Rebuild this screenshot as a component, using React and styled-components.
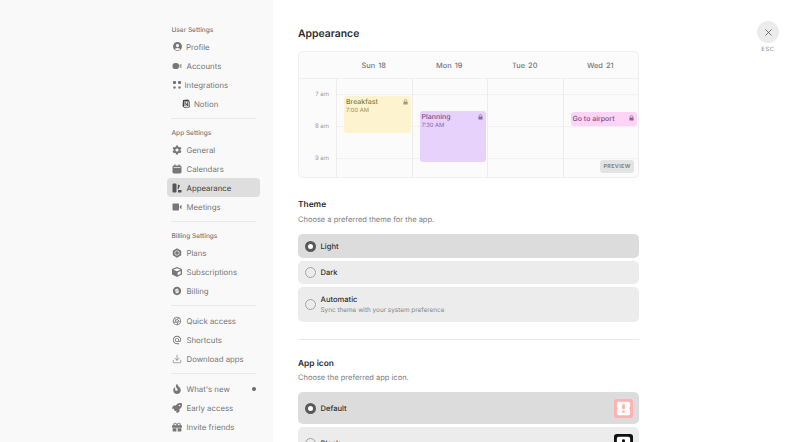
import React from "react";
import styled, { createGlobalStyle } from "styled-components";
import { X, Download } from "lucide-react";
import { IoPersonCircle, IoSettingsSharp } from "react-icons/io5";
import { FaCube, FaFire, FaRocket, FaGift } from "react-icons/fa";
import { RiMoneyDollarCircleFill } from "react-icons/ri";
import { TbAperture } from "react-icons/tb";
import { MdAlternateEmail } from "react-icons/md";

const Global = createGlobalStyle`
  html, body { margin: 0; padding: 0; height: 442px; overflow: hidden; background: #fff; }
  body { font-family: Inter, "Liberation Sans", sans-serif; -webkit-font-smoothing: antialiased; text-rendering: geometricPrecision; }
  * { box-sizing: border-box; }
`;
const Page = styled.div`display: flex; width: 800px; height: 442px; overflow: hidden; background: #fff; position: relative;`;
const Sidebar = styled.aside`width: 273px; flex: none; background: #f9f9f9; padding: 20px 13px 0 167px; display: flex; flex-direction: column;`;
const Heading = styled.div`height: 19px; padding-left: 4.5px; font-size: 6.5px; font-weight: 500; line-height: 21px; color: #777; margin-bottom: -2px; white-space: nowrap;`;
const Row = styled.div`
  height: 19px; display: flex; align-items: center; gap: ${p => p.$gap ?? 4.5}px;
  padding-left: ${p => p.$indent ?? 5}px; border-radius: 4px; flex: none; white-space: nowrap;
  font-size: 7.8px; font-weight: 400; color: ${p => p.$active ? "#3d3d3d" : "#767676"};
  background: ${p => p.$active ? "#dedede" : "transparent"};
  svg { flex: none; }
`;
const Rule = styled.div`height: 1px; background: #e9e9e9; margin: ${p => p.$m || "5px 4px 4px"};`;
const Dot = styled.span`width: 4px; height: 4px; border-radius: 50%; background: #6a6a6a; margin-left: auto; margin-right: 4px;`;
const Main = styled.main`flex: 1; padding: 26px 0 0 25px; min-width: 0;`;
const Column = styled.div`width: 341px;`;
const Title = styled.h1`margin: 0 0 10px; font-size: 10.4px; line-height: 15px; font-weight: 600; color: #2b2b2b;`;
const Preview = styled.div`height: 127px; border: 1px solid #efefef; border-radius: 5px; background: #fbfbfb; overflow: hidden; position: relative; display: grid; grid-template-columns: 37px repeat(4, 1fr); grid-template-rows: 27px 1fr;`;
const DayHead = styled.div`display: flex; align-items: center; justify-content: center; border-bottom: 1px solid #f0f0f0; font-size: 7.4px; word-spacing: 1px; color: #777; font-weight: 500;`;
const Gutter = styled.div`display: flex; flex-direction: column; padding-top: 11px; gap: 23px;`;
const Hour = styled.div`height: 9px; line-height: 9px; font-size: 6px; color: #9a9a9a; text-align: right; padding-right: 7px;`;
const DayCol = styled.div`
  position: relative; border-left: 1px solid #ececec;
  background: linear-gradient(#f1f1f1,#f1f1f1) 0 15px/100% 1px no-repeat, linear-gradient(#f1f1f1,#f1f1f1) 0 47px/100% 1px no-repeat, linear-gradient(#f1f1f1,#f1f1f1) 0 79px/100% 1px no-repeat;
`;
const Event = styled.div`
  position: absolute; top: ${p => p.$top}px; left: ${p => p.$left}px; right: ${p => p.$right}px; height: ${p => p.$h}px;
  background: ${p => p.$bg}; color: ${p => p.$fg}; border-radius: 3px; padding: ${p => p.$pad || "1px 2px"}; font-size: 7px; line-height: 10px; font-weight: 500;
  svg { position: absolute; right: 3px; top: 2.5px; }
  small { display: block; font-size: 5.8px; line-height: 7px; font-weight: 400; opacity: .85; }
`;
const PreviewTag = styled.div`position: absolute; right: 4px; bottom: 4px; width: 34px; height: 13px; border-radius: 3px; background: #e3e3e3; color: #858585; font-size: 5.4px; font-weight: 700; letter-spacing: .35px; display: flex; align-items: center; justify-content: center;`;
const Section = styled.h2`margin: 21px 0 0; font-size: 8.4px; line-height: 12px; font-weight: 600; color: #2b2b2b;`;
const Sub = styled.p`margin: ${p => p.$mt}px 0 ${p => p.$mb}px; font-size: 7.5px; line-height: 11px; color: #808080;`;
const Option = styled.div`
  height: ${p => p.$h}px; margin-bottom: 3px; border-radius: 5px; background: ${p => p.$on ? "#dcdcdc" : "#ececec"};
  display: flex; align-items: center; gap: 4.5px; padding: 0 6px 0 7px; font-size: 7.6px; color: #333; font-weight: 500; position: relative;
`;
const Radio = styled.span`
  width: 11px; height: 11px; border-radius: 50%; flex: none;
  ${p => p.$on ? "background:#fff;border:3px solid #595959;" : "border:1px solid #a4a4a4;"}
`;
const OptText = styled.div`display: flex; flex-direction: column; gap: 2px; small { font-size: 6.4px; font-weight: 400; color: #858585; }`;
const AppIcon = styled.svg`margin-left: auto; flex: none;`;
const Divider = styled.div`height: 1px; background: #e9e9e9; margin-top: 17px; margin-bottom: -3px;`;
const Close = styled.div`position: absolute; right: 21px; top: 21px; display: flex; flex-direction: column; align-items: center; gap: 3px; color: #a0a0a0; font-size: 5.8px; font-weight: 500; letter-spacing: .6px;`;
const CloseBtn = styled.div`width: 22px; height: 22px; border-radius: 50%; background: #ececec; display: flex; align-items: center; justify-content: center; color: #555;`;

const c = "#777";
const Grid = () => <svg width="10" height="10" viewBox="0 0 10 10" fill={c}><rect x="1" y="1" width="3" height="3" rx=".7"/><rect x="6" y="1" width="3" height="3" rx=".7"/><circle cx="2.5" cy="7.5" r="1.2"/><circle cx="7.5" cy="7.5" r="1.2"/></svg>;
const Cam = () => <svg width="10" height="10" viewBox="0 0 10 10" fill={c}><rect x=".5" y="2" width="6.5" height="6" rx="2.8"/><path d="M7.5 3.8l2-1v4.4l-2-1z" opacity=".7"/></svg>;
const Meet = () => <svg width="10" height="10" viewBox="0 0 10 10" fill={c}><rect x=".5" y="1.5" width="6.5" height="7" rx=".8"/><path d="M7.8 4l1.7-1.2v4.4L7.8 6z"/></svg>;
const Cal = () => <svg width="10" height="10" viewBox="0 0 10 10" fill={c}><rect x=".5" y="1.5" width="9" height="8" rx="1.4"/><rect x="2.5" y=".3" width="1" height="2"/><rect x="6.5" y=".3" width="1" height="2"/><rect x="1.5" y="3" width="7" height=".7" fill="#f9f9f9"/></svg>;
const Notion = () => <svg width="8" height="9" viewBox="0 0 8 9"><path d="M1 1l5-.6L7.6 2v6.4L2 8.8.5 7z" fill="#444"/><rect x="2" y="2.5" width="4.7" height="5.4" fill="#eee"/><path d="M3 7V3.3L5.6 7V3.3" stroke="#333" strokeWidth=".8" fill="none"/></svg>;
const Appear = () => <svg width="10" height="10" viewBox="0 0 10 10" fill="#555"><rect x=".5" y=".5" width="4" height="9" rx="1"/><path d="M6 1.5l2 1-1.5 3.5H5.5zM6 7h3.5v2.5H6z"/></svg>;
const Plan = () => <svg width="10" height="10" viewBox="0 0 10 10"><path d="M5 .3l4.2 2.4v4.6L5 9.7.8 7.3V2.7z" fill={c}/><circle cx="5" cy="5" r="2.2" fill="none" stroke="#f9f9f9" strokeWidth=".7"/></svg>;
const Lk = ({ col }) => <svg width="5" height="6" viewBox="0 0 6 7"><path d="M1.5 3V2a1.5 1.5 0 0 1 3 0v1" fill="none" stroke={col} strokeWidth=".8"/><rect x=".5" y="3" width="5" height="3.6" rx=".7" fill={col}/></svg>;

export default function App() {
  return (
    <Page>
      <Global />
      <Sidebar>
        <Heading>User Settings</Heading>
        <Row><IoPersonCircle size={11} color={c} style={{margin:"0 -1px 0 -.5px"}} />Profile</Row>
        <Row><Cam />Accounts</Row>
        <Row $gap={2.5}><Grid />Integrations</Row>
        <Row $indent={15} $gap={4}><Notion />Notion</Row>
        <Rule />
        <Heading>App Settings</Heading>
        <Row><IoSettingsSharp size={10} color={c} />General</Row>
        <Row><Cal />Calendars</Row>
        <Row $active><Appear />Appearance</Row>
        <Row><Meet />Meetings</Row>
        <Rule $m="5px 4px 4px" />
        <Heading>Billing Settings</Heading>
        <Row><Plan />Plans</Row>
        <Row><FaCube size={10} color={c} />Subscriptions</Row>
        <Row><RiMoneyDollarCircleFill size={10} color={c} />Billing</Row>
        <Rule $m="5px 4px 5px" />
        <Row><TbAperture size={10} color={c} />Quick access</Row>
        <Row><MdAlternateEmail size={10} color={c} />Shortcuts</Row>
        <Row><Download size={10} color={c} strokeWidth={1.6} />Download apps</Row>
        <Rule $m="5px 4px 5px" />
        <Row><FaFire size={10} color={c} />What's new<Dot /></Row>
        <Row><FaRocket size={10} color={c} />Early access</Row>
        <Row><FaGift size={10} color={c} />Invite friends</Row>
      </Sidebar>
      <Main>
        <Column>
          <Title>Appearance</Title>
          <Preview>
            <DayHead />
            <DayHead>Sun 18</DayHead>
            <DayHead>Mon 19</DayHead>
            <DayHead>Tue 20</DayHead>
            <DayHead>Wed 21</DayHead>
            <Gutter><Hour>7 am</Hour><Hour>8 am</Hour><Hour>9 am</Hour></Gutter>
            <DayCol>
              <Event $top={17} $left={7} $right={1} $h={37} $bg="#fdf3cf" $fg="#8a7a3c">Breakfast<small>7:00 AM</small><Lk col="#a59a78" /></Event>
            </DayCol>
            <DayCol>
              <Event $top={32} $left={7} $right={1} $h={51} $bg="#e6d2fb" $fg="#7a4f96">Planning<small>7:30 AM</small><Lk col="#8d6aa8" /></Event>
            </DayCol>
            <DayCol />
            <DayCol>
              <Event $top={33} $left={7} $right={1} $h={14} $bg="#fdd3f7" $fg="#7c4f80" $pad="2px 2px">Go to airport<Lk col="#8b6690" /></Event>
            </DayCol>
            <PreviewTag>PREVIEW</PreviewTag>
          </Preview>
          <Section>Theme</Section>
          <Sub $mt={3} $mb={9}>Choose a preferred theme for the app.</Sub>
          <Option $on $h={24}><Radio $on />Light</Option>
          <Option $h={23}><Radio />Dark</Option>
          <Option $h={35}><Radio /><OptText>Automatic<small>Sync theme with your system preference</small></OptText></Option>
          <Divider />
          <Section>App icon</Section>
          <Sub $mt={2} $mb={9}>Choose the preferred app icon.</Sub>
          <Option $on $h={32}><Radio $on />Default
            <AppIcon width="19" height="19" viewBox="0 0 20 20"><rect width="20" height="20" rx="3" fill="#ffb3b0"/><path d="M5 3h10a2 2 0 0 1 2 2v3l-1 2 1 2v3a2 2 0 0 1-2 2H5a2 2 0 0 1-2-2v-3l1-2-1-2V5a2 2 0 0 1 2-2z" fill="#fff"/><rect x="8.5" y="5.5" width="3" height="5.5" rx="1.2" fill="#ffb3b0"/><rect x="8.5" y="12" width="3" height="2.5" rx="1" fill="#ffb3b0"/></AppIcon>
          </Option>
          <Option $h={32}><Radio />Black
            <AppIcon width="19" height="19" viewBox="0 0 20 20"><rect width="20" height="20" rx="3" fill="#111"/><path d="M5 3h10a2 2 0 0 1 2 2v10H3V5a2 2 0 0 1 2-2z" fill="#fff"/><rect x="8.5" y="5.5" width="3" height="5.5" rx="1.2" fill="#111"/></AppIcon>
          </Option>
        </Column>
      </Main>
      <Close>
        <CloseBtn><X size={11} strokeWidth={1.7} /></CloseBtn>
        ESC
      </Close>
    </Page>
  );
}
